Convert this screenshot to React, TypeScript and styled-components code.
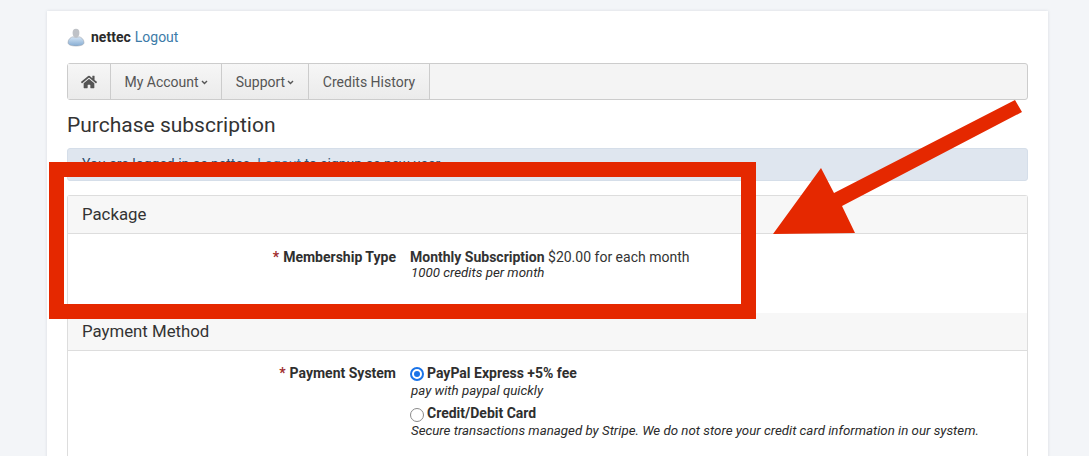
import styled, { createGlobalStyle } from 'styled-components';
import { FaHome } from 'react-icons/fa';

const GlobalStyle = createGlobalStyle`
    html, body {
        margin: 0;
        padding: 0;
        height: 456px;
        overflow: hidden;
        background-color: #f3f5f8;
        font-family: Roboto, "Liberation Sans", sans-serif;
        font-size: 14px;
        color: #333;
    }
`;

const Page = styled.div`
    position: relative;
    width: 1089px;
    height: 456px;
    overflow: hidden;
    padding: 11px 41px 0 47px;
    box-sizing: border-box;
`;

const Card = styled.main`
    background-color: #fff;
    box-shadow: 0 0 3px rgba(60, 70, 90, 0.14);
    padding: 0 20px;
    height: 460px;
`;

const UserBar = styled.div`
    display: flex;
    align-items: center;
    height: 52px;
    font-size: 14px;
`;

const UserName = styled.strong`
    font-weight: 700;
    color: #2b2b2b;
    margin-left: 6px;
    margin-right: 4px;
`;

const PlainLink = styled.a`
    color: #3c7ba8;
    text-decoration: none;
`;

const Navbar = styled.nav`
    display: flex;
    height: 37px;
    box-sizing: border-box;
    border: 1px solid #ccc;
    border-radius: 3px;
    background-color: #f4f4f4;
`;

const NavItem = styled.div<{ $width: number }>`
    display: flex;
    align-items: center;
    justify-content: center;
    width: ${(p) => p.$width}px;
    box-sizing: border-box;
    border-right: 1px solid #ccc;
    background: linear-gradient(#f6f6f6, #ebebeb);
    color: #555;
    font-size: 14px;
`;

const Caret = styled.svg`
    width: 7px;
    height: 5px;
    margin-left: 2px;
    margin-top: 2px;
`;

const PageTitle = styled.h1`
    font-size: 21px;
    font-weight: 400;
    line-height: 26px;
    margin: 12px 0 10px;
    color: #333;
`;

const Notice = styled.div`
    height: 33px;
    box-sizing: border-box;
    border: 1px solid #d5dee9;
    border-radius: 3px;
    background-color: #dfe6ef;
    padding: 7px 14px;
    color: #31506f;
    font-size: 14px;
    margin-bottom: 14px;
`;

const Panel = styled.section<{ $first?: boolean }>`
    border: 1px solid #ddd;
    border-width: ${(p) => (p.$first ? '1px 1px 0' : '0 1px')};
    border-radius: ${(p) => (p.$first ? '3px 3px 0 0' : '0')};
`;

const PanelHeader = styled.div`
    height: 38px;
    box-sizing: border-box;
    border-bottom: 1px solid #ddd;
    background-color: #f7f7f7;
    padding: 0 14px 2px;
    display: flex;
    align-items: center;
    font-size: 16.8px;
    color: #333;
`;

const PanelBody = styled.div<{ $height: number; $top: number }>`
    height: ${(p) => p.$height}px;
    box-sizing: border-box;
    padding-top: ${(p) => p.$top}px;
`;

const FormRow = styled.div`
    display: grid;
    grid-template-columns: 328px 1fr;
    column-gap: 14px;
`;

const FieldLabel = styled.div`
    text-align: right;
    font-weight: 700;
    color: #2f2f2f;
    font-size: 14px;
    line-height: 17px;
`;

const Required = styled.span`
    color: #a02c2c;
    margin-right: 4px;
`;

const FieldValue = styled.div`
    font-size: 14px;
    line-height: 17px;
    color: #333;
`;

const Hint = styled.div`
    font-style: italic;
    font-size: 13.3px;
    line-height: 16px;
    color: #2b2b2b;
    margin-top: -1px;
    padding-left: 1px;
`;

const RadioOption = styled.div`
    margin-bottom: 6px;
`;

const RadioLine = styled.label`
    display: flex;
    align-items: center;
    margin-bottom: 2px;
    font-weight: 700;
    color: #2f2f2f;
`;

const RadioDot = styled.span<{ $checked?: boolean }>`
    width: 14px;
    height: 14px;
    box-sizing: border-box;
    border-radius: 50%;
    margin: ${(p) => (p.$checked ? '0' : '2px 0 0')};
    margin-right: 3px;
    background-color: #fff;
    border: ${(p) => (p.$checked ? '2px solid #1a73e8' : '1.5px solid #8a8a8a')};
    display: flex;
    align-items: center;
    justify-content: center;

    &::after {
        content: '';
        display: ${(p) => (p.$checked ? 'block' : 'none')};
        width: 6px;
        height: 6px;
        border-radius: 50%;
        background-color: #1a73e8;
    }
`;

// Red markup drawn over the screenshot
const HighlightBox = styled.div`
    position: absolute;
    left: 49px;
    top: 162px;
    width: 707px;
    height: 157px;
    box-sizing: border-box;
    border: 15px solid #e52800;
`;

const ArrowLayer = styled.svg`
    position: absolute;
    left: 0;
    top: 0;
    pointer-events: none;
`;

function UserIcon() {
    return (
        <svg width="18" height="19" viewBox="0 0 18 19">
            <defs>
                <linearGradient id="shirt" x1="0" y1="0" x2="0" y2="1">
                    <stop offset="0" stopColor="#d6e6f5" />
                    <stop offset="1" stopColor="#85acd3" />
                </linearGradient>
            </defs>
            <ellipse cx="9" cy="5" rx="3.400" ry="4.200" fill="#bfc2c7" />
            <path d="M1 14.500c0-3.400 3-5.400 5-5.800 1.700 1.100 4.300 1.100 6 0 2 .4 5 2.400 5 5.800 0 2.600-3.800 3.500-8 3.500s-8-.9-8-3.500z" fill="url(#shirt)" stroke="#9a9ea6" strokeWidth=".5" />
        </svg>
    );
}

function NavCaret() {
    return (
        <Caret viewBox="0 0 7 5">
            <path d="M1 1l2.500 2.500L6 1" fill="none" stroke="#555" strokeWidth="1.400" />
        </Caret>
    );
}

export default function App() {
    return (
        <>
            <GlobalStyle />
            <Page>
                <Card>
                    <UserBar>
                        <UserIcon />
                        <UserName>nettec</UserName>
                        <PlainLink href="#">Logout</PlainLink>
                    </UserBar>

                    <Navbar>
                        <NavItem $width={43}><FaHome size={16} color="#555" /></NavItem>
                        <NavItem $width={111}>My Account<NavCaret /></NavItem>
                        <NavItem $width={87}>Support<NavCaret /></NavItem>
                        <NavItem $width={121}>Credits History</NavItem>
                    </Navbar>

                    <PageTitle>Purchase subscription</PageTitle>

                    <Notice>You are logged in as nettec. <PlainLink href="#">Logout</PlainLink> to signup as new user.</Notice>

                    <Panel $first>
                        <PanelHeader>Package</PanelHeader>
                        <PanelBody $height={79} $top={15}>
                            <FormRow>
                                <FieldLabel><Required>*</Required>Membership Type</FieldLabel>
                                <FieldValue>
                                    <strong>Monthly Subscription</strong> $20.00 for each month
                                    <Hint>1000 credits per month</Hint>
                                </FieldValue>
                            </FormRow>
                        </PanelBody>
                    </Panel>

                    <Panel>
                        <PanelHeader>Payment Method</PanelHeader>
                        <PanelBody $height={110} $top={14}>
                            <FormRow>
                                <FieldLabel><Required>*</Required>Payment System</FieldLabel>
                                <FieldValue>
                                    <RadioOption>
                                        <RadioLine><RadioDot $checked />PayPal Express +5% fee</RadioLine>
                                        <Hint>pay with paypal quickly</Hint>
                                    </RadioOption>
                                    <RadioOption>
                                        <RadioLine><RadioDot />Credit/Debit Card</RadioLine>
                                        <Hint>Secure transactions managed by Stripe. We do not store your credit card information in our system.</Hint>
                                    </RadioOption>
                                </FieldValue>
                            </FormRow>
                        </PanelBody>
                    </Panel>
                </Card>

                <HighlightBox />
                <ArrowLayer width="1089" height="456" viewBox="0 0 1089 456">
                    <polygon points="1015,100 1022,112 842,206 855,233 773,234 821,168 834,193" fill="#e52800" />
                </ArrowLayer>
            </Page>
        </>
    );
}
